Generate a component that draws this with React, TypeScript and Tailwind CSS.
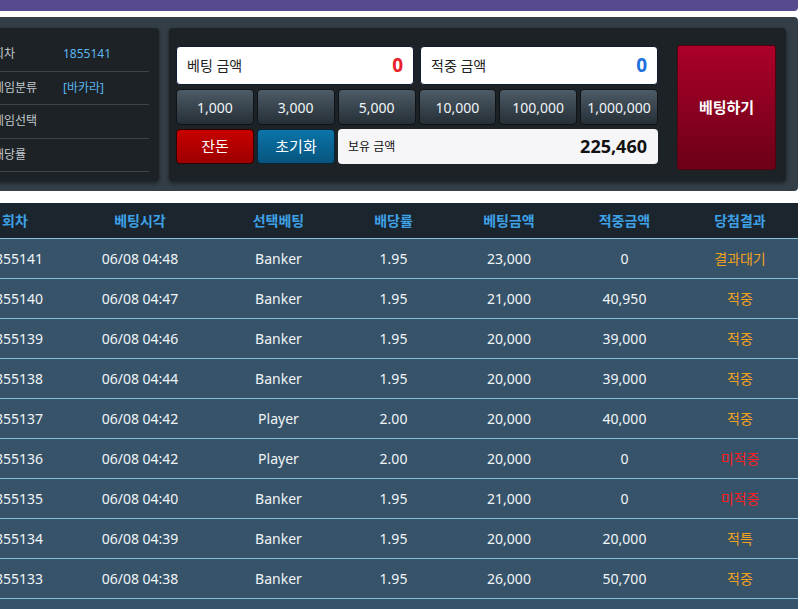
import type { JSX } from "react";

type Bet = {
  round: string;
  time: string;
  pick: string;
  odds: string;
  amount: string;
  win: string;
  result: string;
};

const bets: Bet[] = [
  { round: "1855141", time: "06/08 04:48", pick: "Banker", odds: "1.95", amount: "23,000", win: "0", result: "결과대기" },
  { round: "1855140", time: "06/08 04:47", pick: "Banker", odds: "1.95", amount: "21,000", win: "40,950", result: "적중" },
  { round: "1855139", time: "06/08 04:46", pick: "Banker", odds: "1.95", amount: "20,000", win: "39,000", result: "적중" },
  { round: "1855138", time: "06/08 04:44", pick: "Banker", odds: "1.95", amount: "20,000", win: "39,000", result: "적중" },
  { round: "1855137", time: "06/08 04:42", pick: "Player", odds: "2.00", amount: "20,000", win: "40,000", result: "적중" },
  { round: "1855136", time: "06/08 04:42", pick: "Player", odds: "2.00", amount: "20,000", win: "0", result: "미적중" },
  { round: "1855135", time: "06/08 04:40", pick: "Banker", odds: "1.95", amount: "21,000", win: "0", result: "미적중" },
  { round: "1855134", time: "06/08 04:39", pick: "Banker", odds: "1.95", amount: "20,000", win: "20,000", result: "적특" },
  { round: "1855133", time: "06/08 04:38", pick: "Banker", odds: "1.95", amount: "26,000", win: "50,700", result: "적중" },
  { round: "1855132", time: "06/08 04:37", pick: "Player", odds: "2.00", amount: "20,000", win: "40,000", result: "적중" },
];

const chips = ["1,000", "3,000", "5,000", "10,000", "100,000", "1,000,000"];

const info = [
  { label: "회차", value: "1855141" },
  { label: "게임분류", value: "[바카라]" },
  { label: "게임선택", value: "" },
  { label: "배당률", value: "" },
];

const cols = "grid grid-cols-[88px_162px_115px_115px_116px_115px_116px]";

function InfoPanel(): JSX.Element {
  return (
    <div className="w-[177px] shrink-0 rounded-[4px] bg-[#1c2226] pl-[11px] pr-[10px] pt-[10px] shadow-[0_2px_4px_rgba(0,0,0,0.5)]">
      {info.map((row) => (
        <div
          key={row.label}
          className="flex h-[33.5px] items-center border-b border-[#3b454b] text-[12px]"
        >
          <span className="w-[70px] text-[#c3c9cd]">{row.label}</span>
          <span className="text-[#5cb6ee]">{row.value}</span>
        </div>
      ))}
    </div>
  );
}

function BetPanel(): JSX.Element {
  return (
    <div className="flex flex-1 gap-[19px] rounded-[4px] bg-[#1c2226] pt-[18px] pl-[7px] pr-[9px] shadow-[0_2px_4px_rgba(0,0,0,0.5)]">
      <div className="flex w-[482px] flex-col gap-[4px]">
        {/* amount displays */}
        <div className="flex h-[39px] gap-[6px]">
          <div className="flex flex-1 items-center justify-between rounded-[4px] border border-[#0c1a36] bg-white pl-[10px] pr-[10px]">
            <span className="text-[14px] text-[#222]">베팅 금액</span>
            <span className="text-[19px] font-bold text-[#e8202a]">0</span>
          </div>
          <div className="flex flex-1 items-center justify-between rounded-[4px] border border-[#0c1a36] bg-white pl-[10px] pr-[10px]">
            <span className="text-[14px] text-[#222]">적중 금액</span>
            <span className="text-[19px] font-bold text-[#1f72dc]">0</span>
          </div>
        </div>

        {/* chip buttons */}
        <div className="grid h-[36px] grid-cols-6 gap-[3px]">
          {chips.map((c) => (
            <button
              key={c}
              className="rounded-[4px] border border-[#0f1316] bg-gradient-to-b from-[#4d5c68] to-[#262f36] text-[14px] text-[#eef3f6]"
            >
              {c}
            </button>
          ))}
        </div>

        {/* actions + balance */}
        <div className="flex h-[35px] gap-[3px]">
          <button className="w-[78px] rounded-[4px] border border-[#300] bg-gradient-to-b from-[#c80000] to-[#9c0000] text-[15px] text-white">
            잔돈
          </button>
          <button className="w-[78px] rounded-[4px] border border-[#06243a] bg-gradient-to-b from-[#0b74a8] to-[#07557f] text-[15px] text-white">
            초기화
          </button>
          <div className="flex flex-1 items-center justify-between rounded-[4px] bg-[#f6f6f8] pl-[10px] pr-[11px]">
            <span className="text-[12px] text-[#111]">보유 금액</span>
            <span className="text-[18px] font-bold text-[#111]">225,460</span>
          </div>
        </div>
      </div>

      <button className="mt-[-1px] h-[125px] w-[99px] rounded-[3px] border border-[#55000f] bg-gradient-to-b from-[#ac0029] to-[#6c0018] text-[15px] font-bold text-white">
        베팅하기
      </button>
    </div>
  );
}

function resultColor(r: string): string {
  return r === "미적중" ? "text-[#ff1c1c]" : "text-[#f3a11b]";
}

export default function App(): JSX.Element {
  return (
    <div
      className="min-h-screen overflow-hidden bg-white"
      style={{ fontFamily: "'Noto Sans', 'Noto Sans CJK KR', sans-serif" }}
    >
      <div className="-ml-[29px] w-[827px]">
        <div className="h-[11px] rounded-b-[4px] bg-[#584a8f]" />

        <div className="mt-[6px] flex h-[174px] gap-[10px] rounded-[4px] bg-[#333e46] pt-[11px] pb-[10px] pl-[11px] pr-[12px]">
          <InfoPanel />
          <BetPanel />
        </div>

        <div className="mt-[12px]">
          <div className={`${cols} h-[36px] items-center border-b border-[#8cc2de] bg-[#1b252e] text-center text-[14px] font-bold text-[#3ea1e6]`}>
            <span>회차</span>
            <span>베팅시각</span>
            <span>선택베팅</span>
            <span>배당률</span>
            <span>베팅금액</span>
            <span>적중금액</span>
            <span>당첨결과</span>
          </div>
          {bets.map((b) => (
            <div
              key={b.round}
              className={`${cols} h-[40px] items-center border-b border-[#86c0de] bg-[#36536a] text-center text-[14px] text-[#f1f5f8]`}
            >
              <span>{b.round}</span>
              <span>{b.time}</span>
              <span>{b.pick}</span>
              <span>{b.odds}</span>
              <span>{b.amount}</span>
              <span>{b.win}</span>
              <span className={resultColor(b.result)}>{b.result}</span>
            </div>
          ))}
        </div>
      </div>
    </div>
  );
}
